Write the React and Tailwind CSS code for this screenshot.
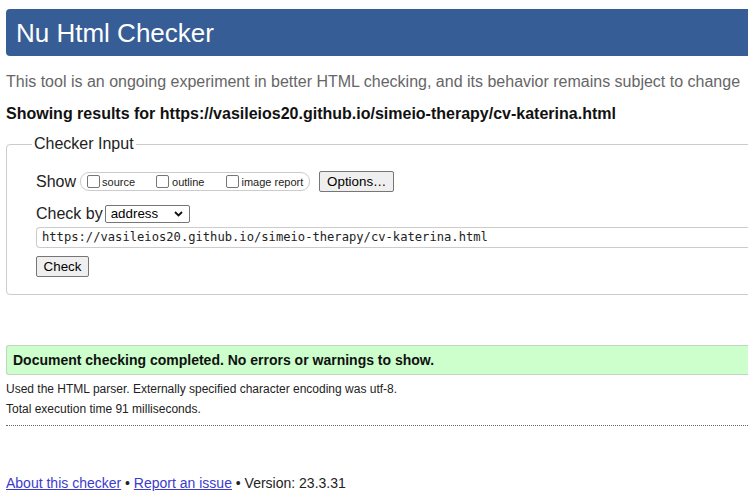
export default function App() {
  const cb = (
    <span className="inline-block w-[13px] h-[13px] shrink-0 rounded-[2px] border border-[#767676] bg-white"></span>
  );
  return (
    <div className="w-[748px] h-[495px] overflow-hidden bg-white text-[#222] font-['Liberation_Sans',Arial,sans-serif]">
      <div className="w-[800px] pl-[6px] pt-[9px]">
        <div className="h-[47px] rounded-l-[4px] bg-[#365d95] flex items-center pl-[10px] text-white text-[26px] leading-[30px]">
          Nu Html Checker
        </div>
        <p className="mt-[16px] text-[16px] leading-[20px] text-[#666] whitespace-nowrap">
          This tool is an ongoing experiment in better HTML checking, and its behavior remains subject to change
        </p>
        <p className="mt-[12px] text-[16px] leading-[20px] font-bold text-[#111] whitespace-nowrap">
          Showing results for https://vasileios20.github.io/simeio-therapy/cv-katerina.html
        </p>
        <fieldset className="mt-[10px] border border-[#cccccc] rounded-[4px] pb-[17px]">
          <legend className="ml-[25px] px-[2px] text-[16px] leading-[20px] text-[#222]">Checker Input</legend>
          <div className="pl-[29px] pt-[17px]">
            <div className="flex items-center h-[21px]">
              <span className="text-[16px] leading-[20px]">Show</span>
              <div className="ml-[4px] h-[19px] flex items-center rounded-[9px] border border-[#cccccc] pl-[6px] pr-[6px] text-[11px] leading-[13px]">
                <span className="flex items-center gap-[2px]">{cb}<span className="mt-[2px]">source</span></span>
                <span className="ml-[21px] flex items-center gap-[3px]">{cb}<span className="mt-[2px]">outline</span></span>
                <span className="ml-[22px] flex items-center gap-[2px]">{cb}<span className="mt-[2px]">image report</span></span>
              </div>
              <div className="ml-[9px] h-[21px] w-[75px] flex items-center justify-center rounded-[2px] border border-[#767676] bg-[#efefef] text-[13.33px] leading-[16px] text-black">
                Options…
              </div>
            </div>
            <div className="mt-[12px] flex items-center h-[20px]">
              <span className="text-[16px] leading-[20px]">Check by</span>
              <div className="ml-[2px] h-[18px] w-[85px] flex items-center justify-between rounded-[2px] border border-[#767676] bg-white pl-[5px] pr-[6px] text-[13.33px] leading-[16px] text-black">
                <span>address</span>
                <svg width="9" height="6" viewBox="0 0 9 6" fill="none">
                  <path d="M1 1 L4.5 4.5 L8 1" stroke="#111" strokeWidth="1.8" />
                </svg>
              </div>
            </div>
            <div className="mt-[3px] h-[21px] w-full flex items-center rounded-l-[4px] border border-r-0 border-[#cccccc] pl-[5px] font-['DejaVu_Sans_Mono',monospace] text-[12.15px] leading-[15px] text-[#222]">
              https://vasileios20.github.io/simeio-therapy/cv-katerina.html
            </div>
            <div className="mt-[8px] h-[21px] w-[53px] flex items-center justify-center rounded-[2px] border border-[#767676] bg-[#efefef] text-[13.33px] leading-[16px] text-black">
              Check
            </div>
          </div>
        </fieldset>
        <div className="mt-[50px] h-[30px] flex items-center rounded-l-[3px] border border-r-0 border-[#c4d4c4] bg-[#ccffcc] pl-[6px] text-[14px] leading-[18px] font-bold text-[#111]">
          Document checking completed. No errors or warnings to show.
        </div>
        <p className="mt-[4px] text-[12px] leading-[20px] text-[#222]">
          Used the HTML parser. Externally specified character encoding was utf-8.
        </p>
        <p className="text-[12px] leading-[20px] text-[#222]">Total execution time 91 milliseconds.</p>
        <div className="mt-[6px] border-t border-dotted border-[#666]"></div>
        <p className="mt-[47px] text-[14px] leading-[20px] text-[#222]">
          <a className="text-[#3b3bcc] underline" href="#">About this checker</a>
          {" • "}
          <a className="text-[#3b3bcc] underline" href="#">Report an issue</a>
          {" • Version: 23.3.31"}
        </p>
      </div>
    </div>
  );
}
